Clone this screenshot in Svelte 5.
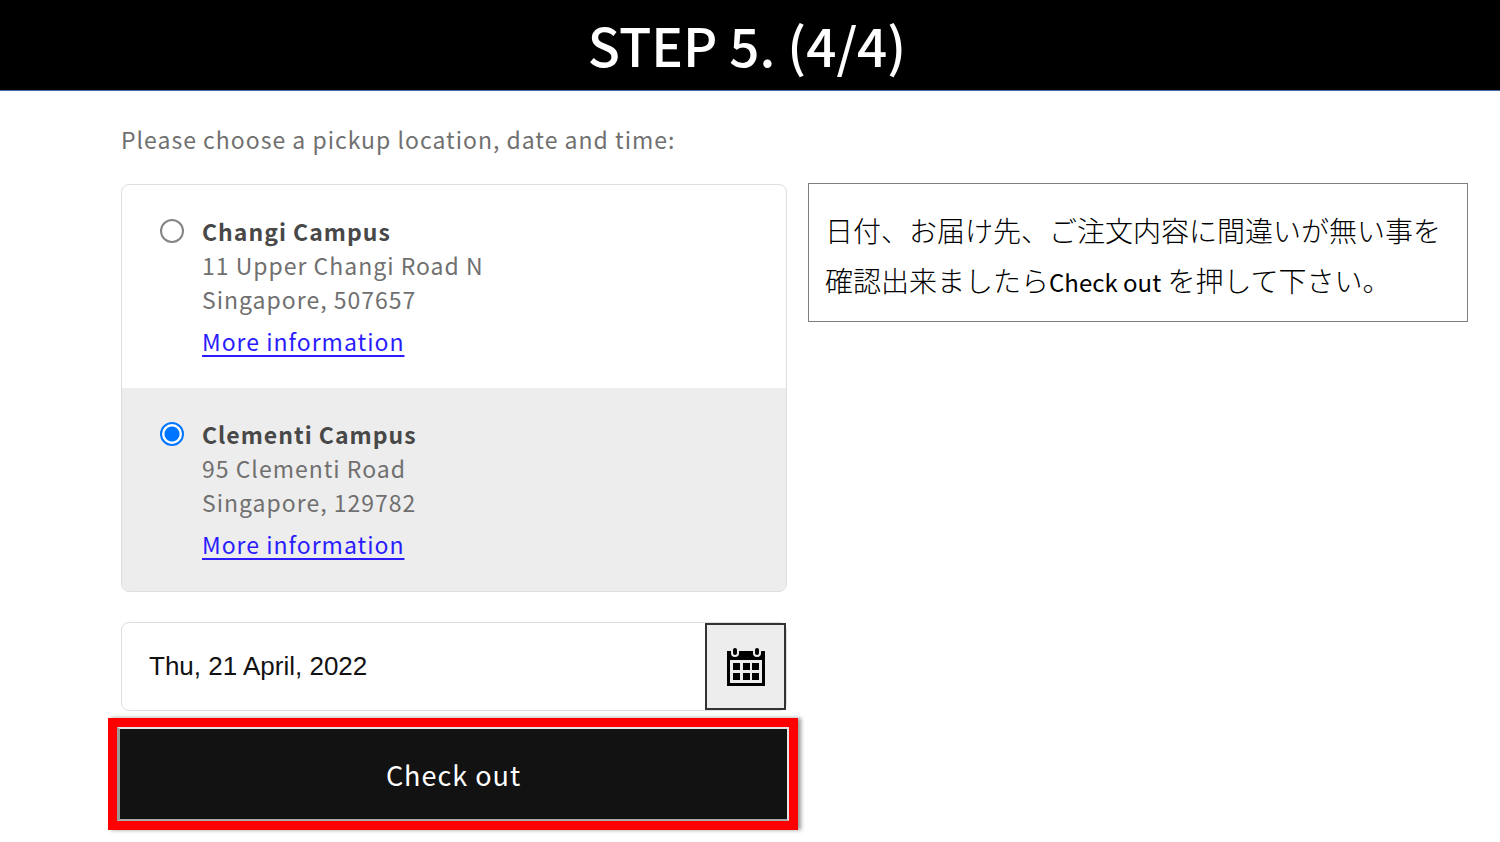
<script>
	const locations = [
		{
			id: 'changi',
			name: 'Changi Campus',
			street: '11 Upper Changi Road N',
			city: 'Singapore, 507657'
		},
		{
			id: 'clementi',
			name: 'Clementi Campus',
			street: '95 Clementi Road',
			city: 'Singapore, 129782'
		}
	];

	let selected = 'clementi';
	let date = 'Thu, 21 April, 2022';
</script>

<svelte:head>
	<title>STEP 5. (4/4)</title>
</svelte:head>

<header>
	<h1>STEP 5. (4/4)</h1>
</header>

<main>
	<form on:submit|preventDefault>
		<fieldset>
			<legend>Please choose a pickup location, date and time:</legend>
			<div class="locations">
				{#each locations as location}
					<div class="location" class:selected={selected === location.id}>
						<input type="radio" name="location" id={location.id} value={location.id} bind:group={selected} />
						<div class="details">
							<label for={location.id}>
								<strong>{location.name}</strong>
								<span>{location.street}</span>
								<span>{location.city}</span>
							</label>
							<a href="#{location.id}">More information</a>
						</div>
					</div>
				{/each}
			</div>
		</fieldset>

		<div class="date">
			<input type="text" aria-label="Pickup date" bind:value={date} />
			<button type="button" aria-label="Open calendar">
				<svg viewBox="0 0 40 40" width="40" height="40">
					<path d="M1 4H39V39H1Z" />
					<path class="light" d="M4 13H36V36H4Z" />
					<path d="M7 16h7v7H7z M17 16h7v7h-7z M26 16h7v7h-7z M7 26h7v7H7z M17 26h7v7h-7z M26 26h7v7h-7z" />
					<rect class="light" x="5" y="0" width="8" height="10" rx="4" />
					<rect class="light" x="27" y="0" width="8" height="10" rx="4" />
					<rect x="7" y="1" width="4" height="7" rx="2" />
					<rect x="29" y="1" width="4" height="7" rx="2" />
				</svg>
			</button>
		</div>

		<div class="highlight">
			<button type="submit">Check out</button>
		</div>
	</form>

	<aside>
		<p>
			日付、お届け先、ご注文内容に間違いが無い事を<br />確認出来ましたら<span lang="en">Check out</span> を押して下さい。
		</p>
	</aside>
</main>

<style>
	:global(body) {
		margin: 0;
		background: #fff;
		font-family: 'Noto Sans CJK JP', 'Noto Sans', sans-serif;
	}

	header {
		background: #000;
		border-bottom: 1px solid #4468b0;
		text-align: center;
	}

	h1 {
		margin: 0;
		padding: 0 6px 2px 0;
		color: #fff;
		font-size: 53px;
		line-height: 88px;
		font-weight: 500;
	}

	main {
		display: grid;
		grid-template-columns: 69fr 66fr;
		column-gap: 10px;
		align-items: start;
		padding: 31px 32px 11px 108px;
	}

	fieldset {
		margin: 0 11px 30px 13px;
		padding: 0;
		border: 0;
		min-width: 0;
		color: #707070;
		font-size: 23px;
		letter-spacing: 1px;
	}

	legend {
		padding: 0;
		margin-bottom: 28px;
		line-height: 34px;
		font-weight: 400;
	}

	.locations {
		border: 1px solid #dedede;
		border-radius: 8px;
		overflow: hidden;
	}

	.location {
		display: flex;
		gap: 18px;
		padding: 29px 38px 30px;
	}

	.location.selected {
		background: #ededed;
	}

	.location input {
		appearance: none;
		box-sizing: border-box;
		flex: none;
		width: 24px;
		height: 24px;
		margin: 5px 0;
		border: 2px solid #858585;
		border-radius: 50%;
		background: #fff;
	}

	.location input:checked {
		border-color: #0075ff;
		background: radial-gradient(#0075ff 7px, #fff 8px);
	}

	.details {
		line-height: 34px;
		font-weight: 400;
	}

	label strong,
	label span {
		display: block;
	}

	strong {
		color: #484848;
		font-weight: 700;
	}

	a {
		display: inline-block;
		margin-top: 8px;
		color: #2a1cff;
		text-decoration-thickness: 2px;
		text-underline-offset: 4px;
	}

	.date {
		display: flex;
		box-sizing: border-box;
		height: 89px;
		margin: 0 11px 7px 13px;
		border: 1px solid #dedede;
		border-radius: 8px;
	}

	.date input {
		flex: 1;
		min-width: 0;
		padding: 0 27px;
		border: 0;
		border-radius: 8px;
		background: none;
		color: #121212;
		font-family: 'Liberation Sans', Arial, sans-serif;
		font-size: 26px;
	}

	.date button {
		display: flex;
		align-items: center;
		justify-content: center;
		width: 81px;
		padding: 0;
		border: 2px solid #333;
		background: #ededed;
	}

	.light {
		fill: #ededed;
	}

	.highlight {
		border: 9px solid #f00;
		box-shadow: 3px 0 4px rgba(0, 0, 0, 0.4);
	}

	.highlight button {
		display: block;
		width: 100%;
		height: 94px;
		border: 2px solid #e4e4e4;
		border-left: 3px solid #999;
		border-bottom-color: #aaa;
		background: #121212;
		color: #fff;
		font-family: inherit;
		font-size: 27px;
		font-weight: 400;
		letter-spacing: 1px;
	}

	aside {
		margin-top: 61px;
		padding: 21px 16px 14px;
		border: 1px solid #7f7f7f;
	}

	aside p {
		margin: 0;
		color: #000;
		font-size: 28px;
		line-height: 50px;
		font-weight: 300;
		white-space: nowrap;
	}

	aside span {
		font-size: 24px;
		font-weight: 400;
	}
</style>
